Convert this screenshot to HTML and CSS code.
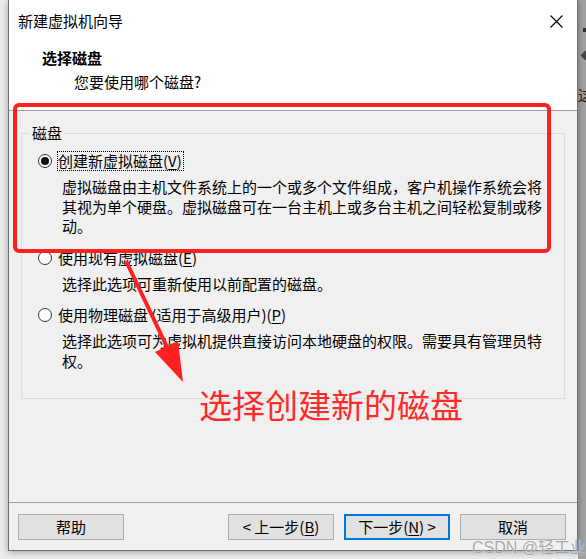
FILE: index.html
```html
<!DOCTYPE html>
<html lang="zh-CN">
<head>
<meta charset="utf-8">
<title>新建虚拟机向导</title>
<link rel="stylesheet" href="styles.css">
</head>
<body>
<div class="screen">
  <div class="gutter-left"></div>
  <div class="window">
    <header class="head">
      <div class="titlebar">
        <span class="title">新建虚拟机向导</span>
        <svg class="close" width="13" height="13" viewBox="0 0 13 13"><path d="M0.5 0.5 L12.5 12.5 M12.5 0.5 L0.5 12.5" stroke="#000" stroke-width="1.1" fill="none"/></svg>
      </div>
      <div class="heading">选择磁盘</div>
      <div class="subheading">您要使用哪个磁盘?</div>
    </header>
    <main class="content">
      <fieldset class="group">
        <legend>磁盘</legend>
        <div class="options">
          <div class="option">
            <div class="opt-row"><span class="radio checked"></span><span class="opt-label focus">创建新虚拟磁盘(<u>V</u>)</span></div>
            <p class="desc">虚拟磁盘由主机文件系统上的一个或多个文件组成，客户机操作系统会将其视为单个硬盘。虚拟磁盘可在一台主机上或多台主机之间轻松复制或移动。</p>
          </div>
          <div class="option">
            <div class="opt-row"><span class="radio"></span><span class="opt-label">使用现有虚拟磁盘(<u>E</u>)</span></div>
            <p class="desc">选择此选项可重新使用以前配置的磁盘。</p>
          </div>
          <div class="option">
            <div class="opt-row"><span class="radio"></span><span class="opt-label">使用物理磁盘 (适用于高级用户)(<u>P</u>)</span></div>
            <p class="desc">选择此选项可为虚拟机提供直接访问本地硬盘的权限。需要具有管理员特权。</p>
          </div>
        </div>
      </fieldset>
    </main>
    <footer class="foot">
      <button class="btn">帮助</button>
      <div class="nav">
        <button class="btn">&lt; 上一步(<u>B</u>)</button>
        <button class="btn default">下一步(<u>N</u>) &gt;</button>
        <button class="btn">取消</button>
      </div>
    </footer>
  </div>
  <div class="gutter-right">
    <span class="sq"></span>
    <span class="dia"></span>
    <span class="zhe">这</span>
  </div>

  <div class="red-box"></div>
  <svg class="arrow" width="586" height="559" viewBox="0 0 586 559">
    <line x1="127" y1="263" x2="167" y2="347" stroke="#ff2020" stroke-width="4" stroke-linecap="round"/>
    <polygon points="183,382 178,341 155,352" fill="#ff2020"/>
  </svg>
  <div class="annotation">选择创建新的磁盘</div>
  <div class="watermark">CSDN @轻工业</div>
</div>
</body>
</html>
```

FILE: styles.css
```css
html, body {
  margin: 0;
  padding: 0;
}
body {
  width: 586px;
  height: 559px;
  overflow: hidden;
  background: #ececec;
  font-family: "Noto Sans CJK SC", "Noto Sans", sans-serif;
  font-size: 15px;
  color: #000;
}
.screen {
  position: relative;
  display: flex;
  width: 586px;
  height: 559px;
}
.gutter-left {
  width: 8px;
  flex: none;
}
.window {
  width: 570px;
  height: 551px;
  flex: none;
  box-sizing: border-box;
  border: 1px solid #707070;
  border-top: none;
  background: #f0f0f0;
  display: flex;
  flex-direction: column;
  box-shadow: 0 1px 7px rgba(0, 0, 0, 0.35);
  position: relative;
  z-index: 1;
}
.gutter-right {
  width: 8px;
  flex: none;
  height: 559px;
  background: #a2a2a2;
  overflow: hidden;
  box-sizing: border-box;
  padding-top: 28px;
}
.sq {
  display: block;
  margin-left: 5px;
  width: 4px;
  height: 4px;
  background: #333;
}
.dia {
  display: block;
  margin: 20px 0 0 4px;
  width: 7px;
  height: 7px;
  transform: rotate(45deg);
  background: #444;
}
.zhe {
  display: block;
  margin: 28px 0 0 0;
  font-size: 15px;
  line-height: 16px;
  color: #222;
  white-space: nowrap;
}

/* header */
.head {
  height: 111px;
  flex: none;
  box-sizing: border-box;
  background: #fff;
  border-bottom: 1px solid #a0a0a0;
}
.titlebar {
  height: 42px;
  display: flex;
  align-items: center;
  justify-content: space-between;
  padding: 0 14px 0 9px;
}
.title {
  line-height: 20px;
}
.close {
  display: block;
}
.heading {
  margin-top: 6px;
  padding-left: 33px;
  font-weight: bold;
  line-height: 20px;
}
.subheading {
  margin-top: 4px;
  padding-left: 65px;
  line-height: 20px;
}

/* content */
.content {
  flex: 1;
  padding: 12px 12px 0 12px;
}
.group {
  margin: 0;
  padding: 8px 0 28px 0;
  border: 1px solid #dcdcdc;
  min-width: 0;
}
.group legend {
  margin-left: 8px;
  padding: 0 2px;
  line-height: 20px;
}
.options {
  padding-left: 16px;
}
.option + .option {
  margin-top: 12px;
}
.opt-row {
  display: flex;
  align-items: center;
  height: 20px;
}
.radio {
  width: 14px;
  height: 14px;
  box-sizing: border-box;
  border: 1px solid #333;
  border-radius: 50%;
  background: #fff;
  margin-right: 5px;
  position: relative;
  flex: none;
}
.radio.checked::after {
  content: "";
  position: absolute;
  left: 2px;
  top: 2px;
  width: 8px;
  height: 8px;
  border-radius: 50%;
  background: #111;
}
.opt-label {
  border: 1px dotted transparent;
  padding-right: 1px;
  line-height: 18px;
  white-space: nowrap;
}
.opt-label.focus {
  border-color: #000;
}
.opt-label u,
.btn u {
  text-underline-offset: 2px;
}
.desc {
  margin: 6px 0 0 24px;
  width: 484px;
  line-height: 19.5px;
}

/* footer */
.foot {
  height: 48px;
  flex: none;
  box-sizing: border-box;
  border-top: 1px solid #a0a0a0;
  display: flex;
  align-items: flex-start;
  padding: 11px 11px 0 9px;
}
.nav {
  margin-left: auto;
  display: flex;
  gap: 10px;
}
.btn {
  width: 106px;
  height: 26px;
  box-sizing: border-box;
  border: 1px solid #adadad;
  background: #e1e1e1;
  font: inherit;
  line-height: 22px;
  padding: 0;
  color: #000;
  border-radius: 0;
}
.btn.default {
  border: 2px solid #0078d7;
}

/* annotations */
.red-box {
  position: absolute;
  left: 13px;
  top: 103px;
  width: 538px;
  height: 150px;
  box-sizing: border-box;
  border: 4px solid #ff2020;
  border-radius: 6px;
  z-index: 2;
}
.arrow {
  position: absolute;
  left: 0;
  top: 0;
  z-index: 2;
  pointer-events: none;
}
.annotation {
  position: absolute;
  left: 199px;
  top: 384px;
  font-size: 33px;
  line-height: 40px;
  color: #ff2a2a;
  z-index: 2;
  white-space: nowrap;
}
.watermark {
  position: absolute;
  left: 472px;
  top: 538px;
  font-family: "Liberation Sans", "Noto Sans CJK SC", sans-serif;
  font-size: 16px;
  line-height: 20px;
  color: rgba(130, 130, 130, 0.7);
  text-shadow: 0 0 1px #fff;
  z-index: 2;
  white-space: nowrap;
}
```
